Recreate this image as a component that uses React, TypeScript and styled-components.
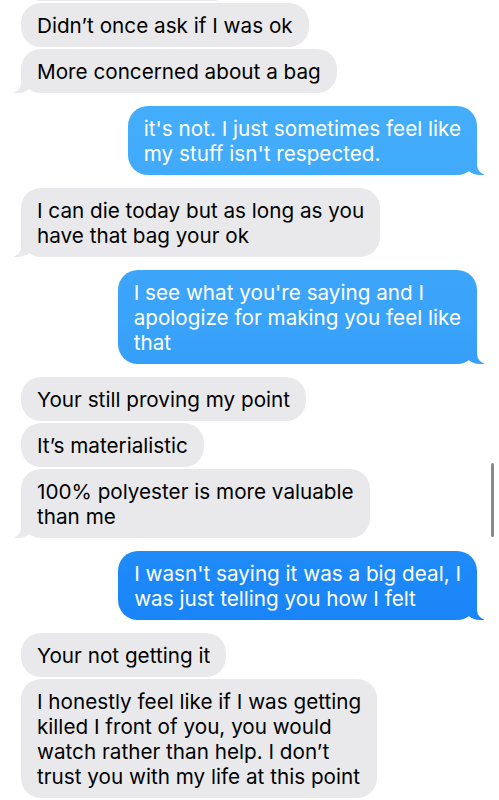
import styled, { createGlobalStyle, css } from "styled-components"

const GlobalStyle = createGlobalStyle`
    html, body {
        margin: 0;
        padding: 0;
        background: #ffffff;
    }
    body {
        font-family: 'Inter', 'Liberation Sans', 'Noto Sans', sans-serif;
        -webkit-font-smoothing: antialiased;
    }
`

const Screen = styled.div`
    position: relative;
    width: 499px;
    height: 800px;
    overflow: hidden;
    background: #ffffff;
`

const Thread = styled.div`
    display: flex;
    flex-direction: column;
    gap: 13px;
    padding: 0 22px 0 21px;
`

const Group = styled.div<{ $me?: boolean }>`
    display: flex;
    flex-direction: column;
    gap: 2px;
    align-items: ${({ $me }) => ($me ? "flex-end" : "flex-start")};
`

const blueFill = css`
    background-image: linear-gradient(180deg, #49b3fc 0%, #3aa3fa 40%, #1a86f8 75%, #0f79f6 100%);
    background-attachment: fixed;
`

const Bubble = styled.div<{ $me?: boolean; $tail?: boolean }>`
    position: relative;
    box-sizing: border-box;
    padding: 9.5px 16px;
    border-radius: 20px;
    font-size: 20.7px;
    line-height: 25px;
    color: ${({ $me }) => ($me ? "#ffffff" : "#000000")};
    background-color: #e9e9eb;
    ${({ $me }) => $me && blueFill}

    ${({ $tail, $me }) =>
        $tail &&
        ($me
            ? css`
                  &::before {
                      content: "";
                      position: absolute;
                      bottom: 0;
                      right: -7px;
                      width: 20px;
                      height: 22px;
                      border-bottom-left-radius: 16px 14px;
                      ${blueFill}
                  }
                  &::after {
                      content: "";
                      position: absolute;
                      bottom: 0;
                      right: -26px;
                      width: 26px;
                      height: 22px;
                      background: #ffffff;
                      border-bottom-left-radius: 10px;
                  }
              `
            : css`
                  &::before {
                      content: "";
                      position: absolute;
                      bottom: 0;
                      left: -7px;
                      width: 20px;
                      height: 22px;
                      background: #e9e9eb;
                      border-bottom-right-radius: 16px 14px;
                  }
                  &::after {
                      content: "";
                      position: absolute;
                      bottom: 0;
                      left: -26px;
                      width: 26px;
                      height: 22px;
                      background: #ffffff;
                      border-bottom-right-radius: 10px;
                  }
              `)}
`

const Line = styled.span`
    position: relative;
    z-index: 1;
    display: block;
    white-space: nowrap;
`

// bottom edge of the bubble scrolled off above
const Peek = styled(Bubble)`
    width: 212px;
    height: 44px;
    margin-top: -43px;
`

const ScrollThumb = styled.div`
    position: absolute;
    right: 5px;
    top: 463px;
    width: 3px;
    height: 74px;
    border-radius: 2px;
    background: #8a8a8e;
`

type Message = { lines: string[] }
type Block = { me: boolean; messages: Message[] }

const thread: Block[] = [
    {
        me: false,
        messages: [
            { lines: ["Didn\u2019t once ask if I was ok"] },
            { lines: ["More concerned about a bag"] },
        ],
    },
    {
        me: true,
        messages: [{ lines: ["it's not. I just sometimes feel like", "my stuff isn't respected."] }],
    },
    {
        me: false,
        messages: [{ lines: ["I can die today but as long as you", "have that bag your ok"] }],
    },
    {
        me: true,
        messages: [
            { lines: ["I see what you're saying and I", "apologize for making you feel like", "that"] },
        ],
    },
    {
        me: false,
        messages: [
            { lines: ["Your still proving my point"] },
            { lines: ["It\u2019s materialistic"] },
            { lines: ["100% polyester is more valuable", "than me"] },
        ],
    },
    {
        me: true,
        messages: [{ lines: ["I wasn't saying it was a big deal, I", "was just telling you how I felt"] }],
    },
    {
        me: false,
        messages: [
            { lines: ["Your not getting it"] },
            {
                lines: [
                    "I honestly feel like if I was getting",
                    "killed I front of you, you would",
                    "watch rather than help. I don\u2019t",
                    "trust you with my life at this point",
                ],
            },
        ],
    },
]

export default function App() {
    return (
        <Screen>
            <GlobalStyle />
            <Thread>
                {thread.map((block, bi) => (
                    <Group key={bi} $me={block.me}>
                        {bi === 0 && <Peek />}
                        {block.messages.map((msg, mi) => {
                            const last = mi === block.messages.length - 1
                            // the very last bubble runs off the screen, so no tail shows
                            const tail = last && bi !== thread.length - 1
                            return (
                                <Bubble key={mi} $me={block.me} $tail={tail}>
                                    {msg.lines.map((line) => (
                                        <Line key={line}>{line}</Line>
                                    ))}
                                </Bubble>
                            )
                        })}
                    </Group>
                ))}
            </Thread>
            <ScrollThumb />
        </Screen>
    )
}
